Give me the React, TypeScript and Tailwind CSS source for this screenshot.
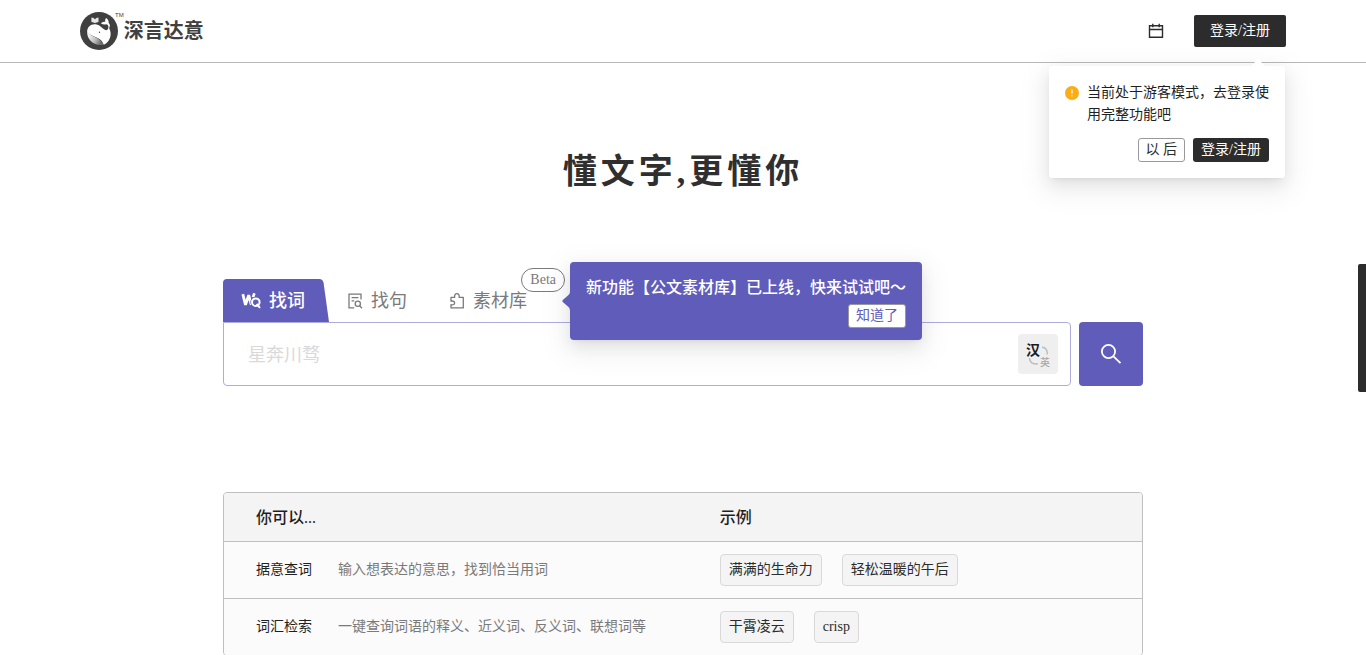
import { useState } from "react";

const TABS = [
  { name: "找句", icon: SentenceIcon },
  { name: "素材库", icon: PuzzleIcon },
];

const ROWS = [
  {
    name: "据意查词",
    desc: "输入想表达的意思，找到恰当用词",
    examples: ["满满的生命力", "轻松温暖的午后"],
  },
  {
    name: "词汇检索",
    desc: "一键查询词语的释义、近义词、反义词、联想词等",
    examples: ["干霄凌云", "crisp"],
  },
];

const POPOVER_SHADOW =
  "shadow-[0_3px_6px_-4px_rgba(0,0,0,0.12),0_6px_16px_rgba(0,0,0,0.08),0_9px_28px_8px_rgba(0,0,0,0.05)]";

function WhaleLogo() {
  return (
    <svg width="38" height="38" viewBox="0 0 38 38" aria-hidden="true">
      <defs>
        <linearGradient id="belly" x1="0.1" y1="0.3" x2="0.9" y2="0.7">
          <stop offset="0" stopColor="#f5f5f5" />
          <stop offset="0.55" stopColor="#bdbdbd" />
          <stop offset="1" stopColor="#6e6e6e" />
        </linearGradient>
      </defs>
      <circle cx="19" cy="19" r="19" fill="#404040" />
      <path d="M11.400 5.400c1.700.2 2.900.8 3.600 1.800.7-1 1.800-1.600 3.500-1.800v4.600c-1.500.1-2.700.5-3.500 1.300-.8-.8-2-1.200-3.600-1.300z" fill="#e8e8e8" />
      <path d="M7.200 20c-.3-4.600 3.300-8 8-7.700 4.300.2 6.600 3.700 9.600 5.500 2 1.100 3.500-.2 3.700-2.800 3.300 4.900 2.800 11.300-1.200 15.200-1 1-2.300 1.900-3.600 2.500-1.200-3.700-3.400-6-7.200-7.300-4.200-1.500-7.500-3-9.300-5.400z" fill="#fff" />
      <path d="M7.200 19.500c-.6 6.800 5.200 13.300 13 13.600 1.300 0 2.400-.1 3.500-.4-1.700-3.500-4.300-5.800-8-7.300-3.800-1.500-6.900-3.200-8.500-5.900z" fill="url(#belly)" />
      <path d="M28.500 16.500c.3-2.300-.5-3.700-2-4.300-2 .7-4 .4-5.600-.9 1.400-1.200 2.800-1.700 4.400-1.500-.4-1.500-.1-2.800.9-3.900 1.800 1.200 2.700 2.900 2.500 5 1.600 1.500 1.700 4-.2 5.600z" fill="#fff" />
      <circle cx="19.500" cy="20.300" r=".7" fill="#404040" />
    </svg>
  );
}

function CalendarIcon() {
  return (
    <svg width="16" height="16" viewBox="0 0 16 16" fill="none" stroke="#2c2c2c" strokeWidth="1.4" aria-hidden="true">
      <path d="M1.500 2.700h13v11.600h-13zM1.500 6.500h13M4.800.8v3.500M11.200.8v3.500" />
    </svg>
  );
}

function WordIcon() {
  return (
    <svg width="20" height="20" viewBox="0 0 20 20" fill="none" stroke="#fff" aria-hidden="true">
      <path d="M1.800 3.200l2.700 10.600 3.200-9.600 2.600 9.600" strokeWidth="2.800" strokeLinejoin="bevel" />
      <path d="M12 6.200l1.400-4" strokeWidth="2.600" />
      <circle cx="14.800" cy="11.200" r="4.800" fill="#5f5cba" stroke="#5f5cba" strokeWidth="1.400" />
      <circle cx="14.800" cy="11.200" r="3.800" strokeWidth="2" />
      <path d="M15.600 13l3.400 3.800" strokeWidth="2" />
    </svg>
  );
}

function SentenceIcon() {
  return (
    <svg width="16" height="18" viewBox="0 0 16 18" fill="none" stroke="currentColor" strokeWidth="1.300" aria-hidden="true">
      <path d="M14 7.500V2.200H2v13.600h5.200M4.600 5.600h6.800M4.600 8.800h2.600" />
      <circle cx="10.800" cy="11.800" r="2.600" />
      <path d="M12.600 13.800l2.400 2.400" />
    </svg>
  );
}

function PuzzleIcon() {
  return (
    <svg width="16" height="18" viewBox="0 0 16 18" fill="none" stroke="currentColor" strokeWidth="1.300" strokeLinejoin="round" aria-hidden="true">
      <path d="M2 5.400h3.700c-.5-2.300.6-3.700 2.200-3.700s2.700 1.400 2.200 3.700h4.200v10.500H2v-3.200c2.500.4 3.600-.4 3.600-1.800S4.500 8.700 2 9.100z" />
    </svg>
  );
}

function LanguageIcon() {
  return (
    <span className="grid grid-cols-[14px_10px] grid-rows-[14px_10px] items-center pt-1 text-center leading-none">
      <span className="text-sm font-bold leading-[14px] text-[#1a1a1a]">汉</span>
      <svg width="10" height="12" viewBox="0 0 10 12" fill="none" stroke="#bdbdbd" strokeWidth="1.500" aria-hidden="true">
        <path d="M2 2.200c4 .2 5.500 2.400 5.300 7.300" />
      </svg>
      <svg width="12" height="10" viewBox="0 0 12 10" fill="none" stroke="#bdbdbd" strokeWidth="1.500" className="justify-self-end" aria-hidden="true">
        <path d="M1.500 0c0 4.500 3 6.200 8.500 6" />
      </svg>
      <span className="text-[10px] font-medium leading-[10px] text-[#a8a8a8]">英</span>
    </span>
  );
}

function LoginPopover({ onClose }: { onClose: () => void }) {
  return (
    <div
      role="dialog"
      aria-label="登录提示"
      className={`absolute right-px top-full z-20 mt-[19px] w-[236px] rounded-[3px] bg-white px-4 py-4 ${POPOVER_SHADOW}`}
    >
      <svg width="18" height="8" viewBox="0 0 18 8" className="absolute -top-2 right-[18px]" aria-hidden="true">
        <path d="M0 8c2 0 3-.6 4-1.600L8 1.200q1-1.200 2 0l4 5.200c1 1 2 1.600 4 1.600z" fill="#fff" />
      </svg>
      <div className="flex gap-2">
        <svg width="14" height="14" viewBox="0 0 14 14" className="mt-1 shrink-0" aria-hidden="true">
          <circle cx="7" cy="7" r="7" fill="#faad14" />
          <path d="M7 3.400v4.400M7 9.200v1.400" stroke="#fff" strokeWidth="1.100" />
        </svg>
        <p className="text-sm leading-[22px] text-[#1f1f1f]">当前处于游客模式，去登录使用完整功能吧</p>
      </div>
      <div className="mt-3 flex justify-end gap-2">
        <button
          type="button"
          onClick={onClose}
          className="h-6 rounded-[3px] border border-[#999] bg-white px-[7px] text-sm leading-[22px] text-[#2c2c2c]"
        >
          以 后
        </button>
        <button type="button" className="h-6 rounded-[3px] bg-[#2c2c2c] px-2 text-sm leading-6 text-white">
          登录/注册
        </button>
      </div>
    </div>
  );
}

function FeatureTip({ onClose }: { onClose: () => void }) {
  return (
    <div
      role="status"
      className={`absolute -top-[17px] left-[347px] z-10 flex h-[78px] flex-col items-end rounded-[4px] bg-[#5f5cba] px-4 pt-[14px] ${POPOVER_SHADOW}`}
    >
      <svg width="8" height="20" viewBox="0 0 8 20" className="absolute -left-2 top-[29px]" aria-hidden="true">
        <path d="M8 0c0 2-.5 3-1.500 4L.8 9q-.9 1 0 2l5.700 5c1 1 1.500 2 1.500 4z" fill="#5f5cba" />
      </svg>
      <p className="whitespace-nowrap text-base font-medium text-white">新功能【公文素材库】已上线，快来试试吧～</p>
      <button
        type="button"
        onClick={onClose}
        className="mt-1 h-6 rounded-[3px] border border-[#999] bg-white px-[7px] text-sm leading-[22px] text-[#5f5cba]"
      >
        知道了
      </button>
    </div>
  );
}

export default function App() {
  const [showLogin, setShowLogin] = useState(true);
  const [showTip, setShowTip] = useState(true);

  return (
    <div className="bg-white font-['Liberation_Serif','Noto_Sans_CJK_SC',serif] text-[#1f1f1f]">
      <header className="flex h-[63px] items-center justify-between border-b border-[#b8b8b8] px-20">
        <a href="#" className="flex items-center text-[#404040]">
          <WhaleLogo />
          <span className="-ml-[3px] self-start font-['Liberation_Sans',sans-serif] text-[6px] leading-[6px]">TM</span>
          <span className="text-xl font-bold">深言达意</span>
        </a>
        <div className="flex items-center gap-[30px]">
          <button type="button" aria-label="日历">
            <CalendarIcon />
          </button>
          <div className="relative">
            <button type="button" className="block h-8 rounded-[2px] bg-[#2c2c2c] px-4 text-sm text-white">
              登录/注册
            </button>
            {showLogin && <LoginPopover onClose={() => setShowLogin(false)} />}
          </div>
        </div>
      </header>

      <main className="mx-auto max-w-[920px]">
        <h1 className="pb-[83px] pt-[85px] text-center text-[34px] font-bold leading-[48px] tracking-[4px] text-[#2f2f2f]">
          懂文字,更懂你
        </h1>

        {/* Search */}
        <section className="relative">
          <div role="tablist" className="flex h-[43px]">
            <button
              type="button"
              role="tab"
              aria-selected="true"
              className="relative flex w-[106px] items-center gap-2 pl-[18px] text-lg font-medium text-white"
            >
              <svg width="106" height="43" viewBox="0 0 106 43" className="absolute left-0 top-0" aria-hidden="true">
                <path d="M0 4q0-4 4-4h92q4 0 4.600 4L106 43H0z" fill="#5f5cba" />
              </svg>
              <span className="relative">
                <WordIcon />
              </span>
              <span className="relative">找词</span>
            </button>
            {TABS.map((tab) => (
              <button
                key={tab.name}
                type="button"
                role="tab"
                aria-selected="false"
                className="relative ml-[18px] flex items-center gap-2 pr-6 text-lg text-[#7a7a7a]"
              >
                <tab.icon />
                {tab.name}
                {tab.name === "素材库" && (
                  <span className="absolute -top-[11px] right-[-14px] h-6 rounded-full border border-[#7a7a7a] bg-white px-2 text-sm leading-[22px]">
                    Beta
                  </span>
                )}
              </button>
            ))}
          </div>
          {showTip && <FeatureTip onClose={() => setShowTip(false)} />}

          <form className="flex gap-2" onSubmit={(e) => e.preventDefault()}>
            <div className="flex h-16 flex-1 items-center rounded-b-[4px] rounded-tr-[4px] border border-[#aeacdc] pl-6 pr-3">
              <input
                type="text"
                aria-label="搜索"
                placeholder="星奔川骛"
                className="min-w-0 flex-1 bg-transparent pt-0.5 text-lg outline-none placeholder:text-[#d9d9d9]"
              />
              <button
                type="button"
                aria-label="切换汉英"
                className="flex size-10 items-center justify-center rounded-[4px] bg-[#efefef]"
              >
                <LanguageIcon />
              </button>
            </div>
            <button
              type="submit"
              aria-label="搜索"
              className="flex size-16 items-center justify-center rounded-[4px] bg-[#5f5cba]"
            >
              <svg width="22" height="22" viewBox="0 0 22 22" fill="none" stroke="#fff" strokeWidth="1.800" aria-hidden="true">
                <circle cx="8.500" cy="8.500" r="6.600" />
                <path d="M13.200 13.200l7.300 7" />
              </svg>
            </button>
          </form>
        </section>

        {/* Usage examples */}
        <div className="mt-[106px] overflow-hidden rounded-[4px] border border-[#bfbfbf]">
          <table className="w-full table-fixed border-collapse text-left">
            <thead>
              <tr className="h-12 bg-[#f4f4f4] text-base">
                <th className="w-[54%] pl-8 pt-0.5 font-medium">你可以...</th>
                <th className="pt-0.5 font-medium">示例</th>
              </tr>
            </thead>
            <tbody className="text-sm">
              {ROWS.map((row) => (
                <tr key={row.name} className="h-[57px] border-t border-[#bfbfbf] bg-[#fbfbfb]">
                  <td className="pl-8">
                    <div className="flex gap-[26px]">
                      <span>{row.name}</span>
                      <span className="text-[#7a7a7a]">{row.desc}</span>
                    </div>
                  </td>
                  <td>
                    <div className="flex gap-5">
                      {row.examples.map((example) => (
                        <button
                          key={example}
                          type="button"
                          className="h-8 rounded-[4px] border border-[#d9d9d9] bg-[#f4f4f4] px-2 text-[#2c2c2c]"
                        >
                          {example}
                        </button>
                      ))}
                    </div>
                  </td>
                </tr>
              ))}
            </tbody>
          </table>
        </div>
      </main>

      <aside className="fixed right-0 top-[264px] h-32 w-2 rounded-l-[2px] bg-[#2c2c2c]" aria-label="侧边栏" />
    </div>
  );
}
